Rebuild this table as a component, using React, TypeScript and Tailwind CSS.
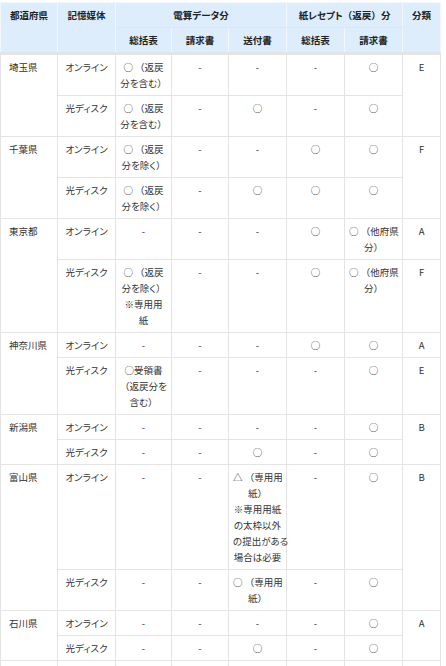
import React from 'react';

type Row = {
  media: string;
  cells: string[];
};

type Pref = {
  name: string;
  rows: Row[];
  cls: { v: string; span: number }[];
};

const DATA: Pref[] = [
  {
    name: '埼玉県',
    rows: [
      { media: 'オンライン', cells: ['○ （返戻\n分を含む）', '-', '-', '-', '○'] },
      { media: '光ディスク', cells: ['○ （返戻\n分を含む）', '-', '○', '-', '○'] },
    ],
    cls: [{ v: 'E', span: 2 }],
  },
  {
    name: '千葉県',
    rows: [
      { media: 'オンライン', cells: ['○ （返戻\n分を除く）', '-', '-', '○', '○'] },
      { media: '光ディスク', cells: ['○ （返戻\n分を除く）', '-', '○', '○', '○'] },
    ],
    cls: [{ v: 'F', span: 2 }],
  },
  {
    name: '東京都',
    rows: [
      { media: 'オンライン', cells: ['-', '-', '-', '○', '○ （他府県\n分）'] },
      { media: '光ディスク', cells: ['○ （返戻\n分を除く）\n※専用用\n紙', '-', '-', '○', '○ （他府県\n分）'] },
    ],
    cls: [
      { v: 'A', span: 1 },
      { v: 'F', span: 1 },
    ],
  },
  {
    name: '神奈川県',
    rows: [
      { media: 'オンライン', cells: ['-', '-', '-', '○', '○'] },
      { media: '光ディスク', cells: ['○受領書\n（返戻分を\n含む）', '-', '-', '-', '○'] },
    ],
    cls: [
      { v: 'A', span: 1 },
      { v: 'E', span: 1 },
    ],
  },
  {
    name: '新潟県',
    rows: [
      { media: 'オンライン', cells: ['-', '-', '-', '-', '○'] },
      { media: '光ディスク', cells: ['-', '-', '○', '-', '○'] },
    ],
    cls: [{ v: 'B', span: 2 }],
  },
  {
    name: '富山県',
    rows: [
      {
        media: 'オンライン',
        cells: ['-', '-', '△ （専用用\n紙）\n※専用用紙\nの太枠以外\nの提出がある\n場合は必要', '-', '○'],
      },
      { media: '光ディスク', cells: ['-', '-', '○ （専用用\n紙）', '-', '○'] },
    ],
    cls: [{ v: 'B', span: 2 }],
  },
  {
    name: '石川県',
    rows: [
      { media: 'オンライン', cells: ['-', '-', '-', '-', '○'] },
      { media: '光ディスク', cells: ['-', '-', '○', '-', '○'] },
    ],
    cls: [{ v: 'A', span: 2 }],
  },
  {
    name: '福井県',
    rows: [
      { media: 'オンライン', cells: ['-', '-', '-', '-', '○'] },
      { media: '光ディスク', cells: ['-', '-', '○', '-', '○'] },
    ],
    cls: [{ v: 'A', span: 2 }],
  },
];

const td = 'border border-[#e4e4e4] px-1 py-1 align-top text-center';
const th = 'border border-[#f2f7fd] border-b-[#e4e4e4] px-1 py-1 align-top text-center font-bold text-[#222]';

// full-width brackets keep their full width (kana stay proportional)
function Txt({ s }: { s: string }) {
  return (
    <>
      {s.split(/([（）])/).map((part, i) =>
        part === '（' || part === '）' ? (
          <span key={i} className="[font-feature-settings:normal]">
            {part}
          </span>
        ) : (
          part
        )
      )}
    </>
  );
}

function Lines({ text }: { text: string }) {
  return (
    <>
      {text.split('\n').map((p, i) => (
        <span key={i} className="block whitespace-nowrap">
          <Txt s={p} />
        </span>
      ))}
    </>
  );
}

export default function App() {
  return (
    <div className="w-[446px] bg-white pt-[2px] font-['Noto_Sans_CJK_JP',sans-serif] text-[9.5px] leading-[16px] text-[#333] [font-feature-settings:'palt']">
      <table className="w-[440px] table-fixed border-collapse">
        <colgroup>
          <col className="w-[57px]" />
          <col className="w-[58px]" />
          <col className="w-[56px]" />
          <col className="w-[57px]" />
          <col className="w-[58px]" />
          <col className="w-[58px]" />
          <col className="w-[58px]" />
          <col className="w-[38px]" />
        </colgroup>
        <thead className="bg-[#deedfb]">
          <tr>
            <th rowSpan={2} className={th + ' border-b-[3px]'}>都道府県</th>
            <th rowSpan={2} className={th + ' border-b-[3px]'}>記憶媒体</th>
            <th colSpan={3} className={th}>電算データ分</th>
            <th colSpan={2} className={th}>
              <Txt s="紙レセプト（返戻）分" />
            </th>
            <th rowSpan={2} className={th + ' border-b-[3px]'}>分類</th>
          </tr>
          <tr>
            {['総括表', '請求書', '送付書', '総括表', '請求書'].map((h, i) => (
              <th key={i} className={th + ' border-b-[3px]'}>
                {h}
              </th>
            ))}
          </tr>
        </thead>
        <tbody>
          {DATA.map((p) =>
            p.rows.map((r, ri) => {
              let clsCell = null;
              let acc = 0;
              for (const c of p.cls) {
                if (acc === ri) {
                  clsCell = (
                    <td rowSpan={c.span} className={td}>
                      {c.v}
                    </td>
                  );
                }
                acc += c.span;
              }
              return (
                <tr key={p.name + ri}>
                  {ri === 0 && (
                    <td rowSpan={p.rows.length} className={td + ' pl-2 text-left'}>
                      {p.name}
                    </td>
                  )}
                  <td className={td}>{r.media}</td>
                  {r.cells.map((c, ci) => (
                    <td key={ci} className={td}>
                      <Lines text={c} />
                    </td>
                  ))}
                  {clsCell}
                </tr>
              );
            })
          )}
        </tbody>
      </table>
    </div>
  );
}
